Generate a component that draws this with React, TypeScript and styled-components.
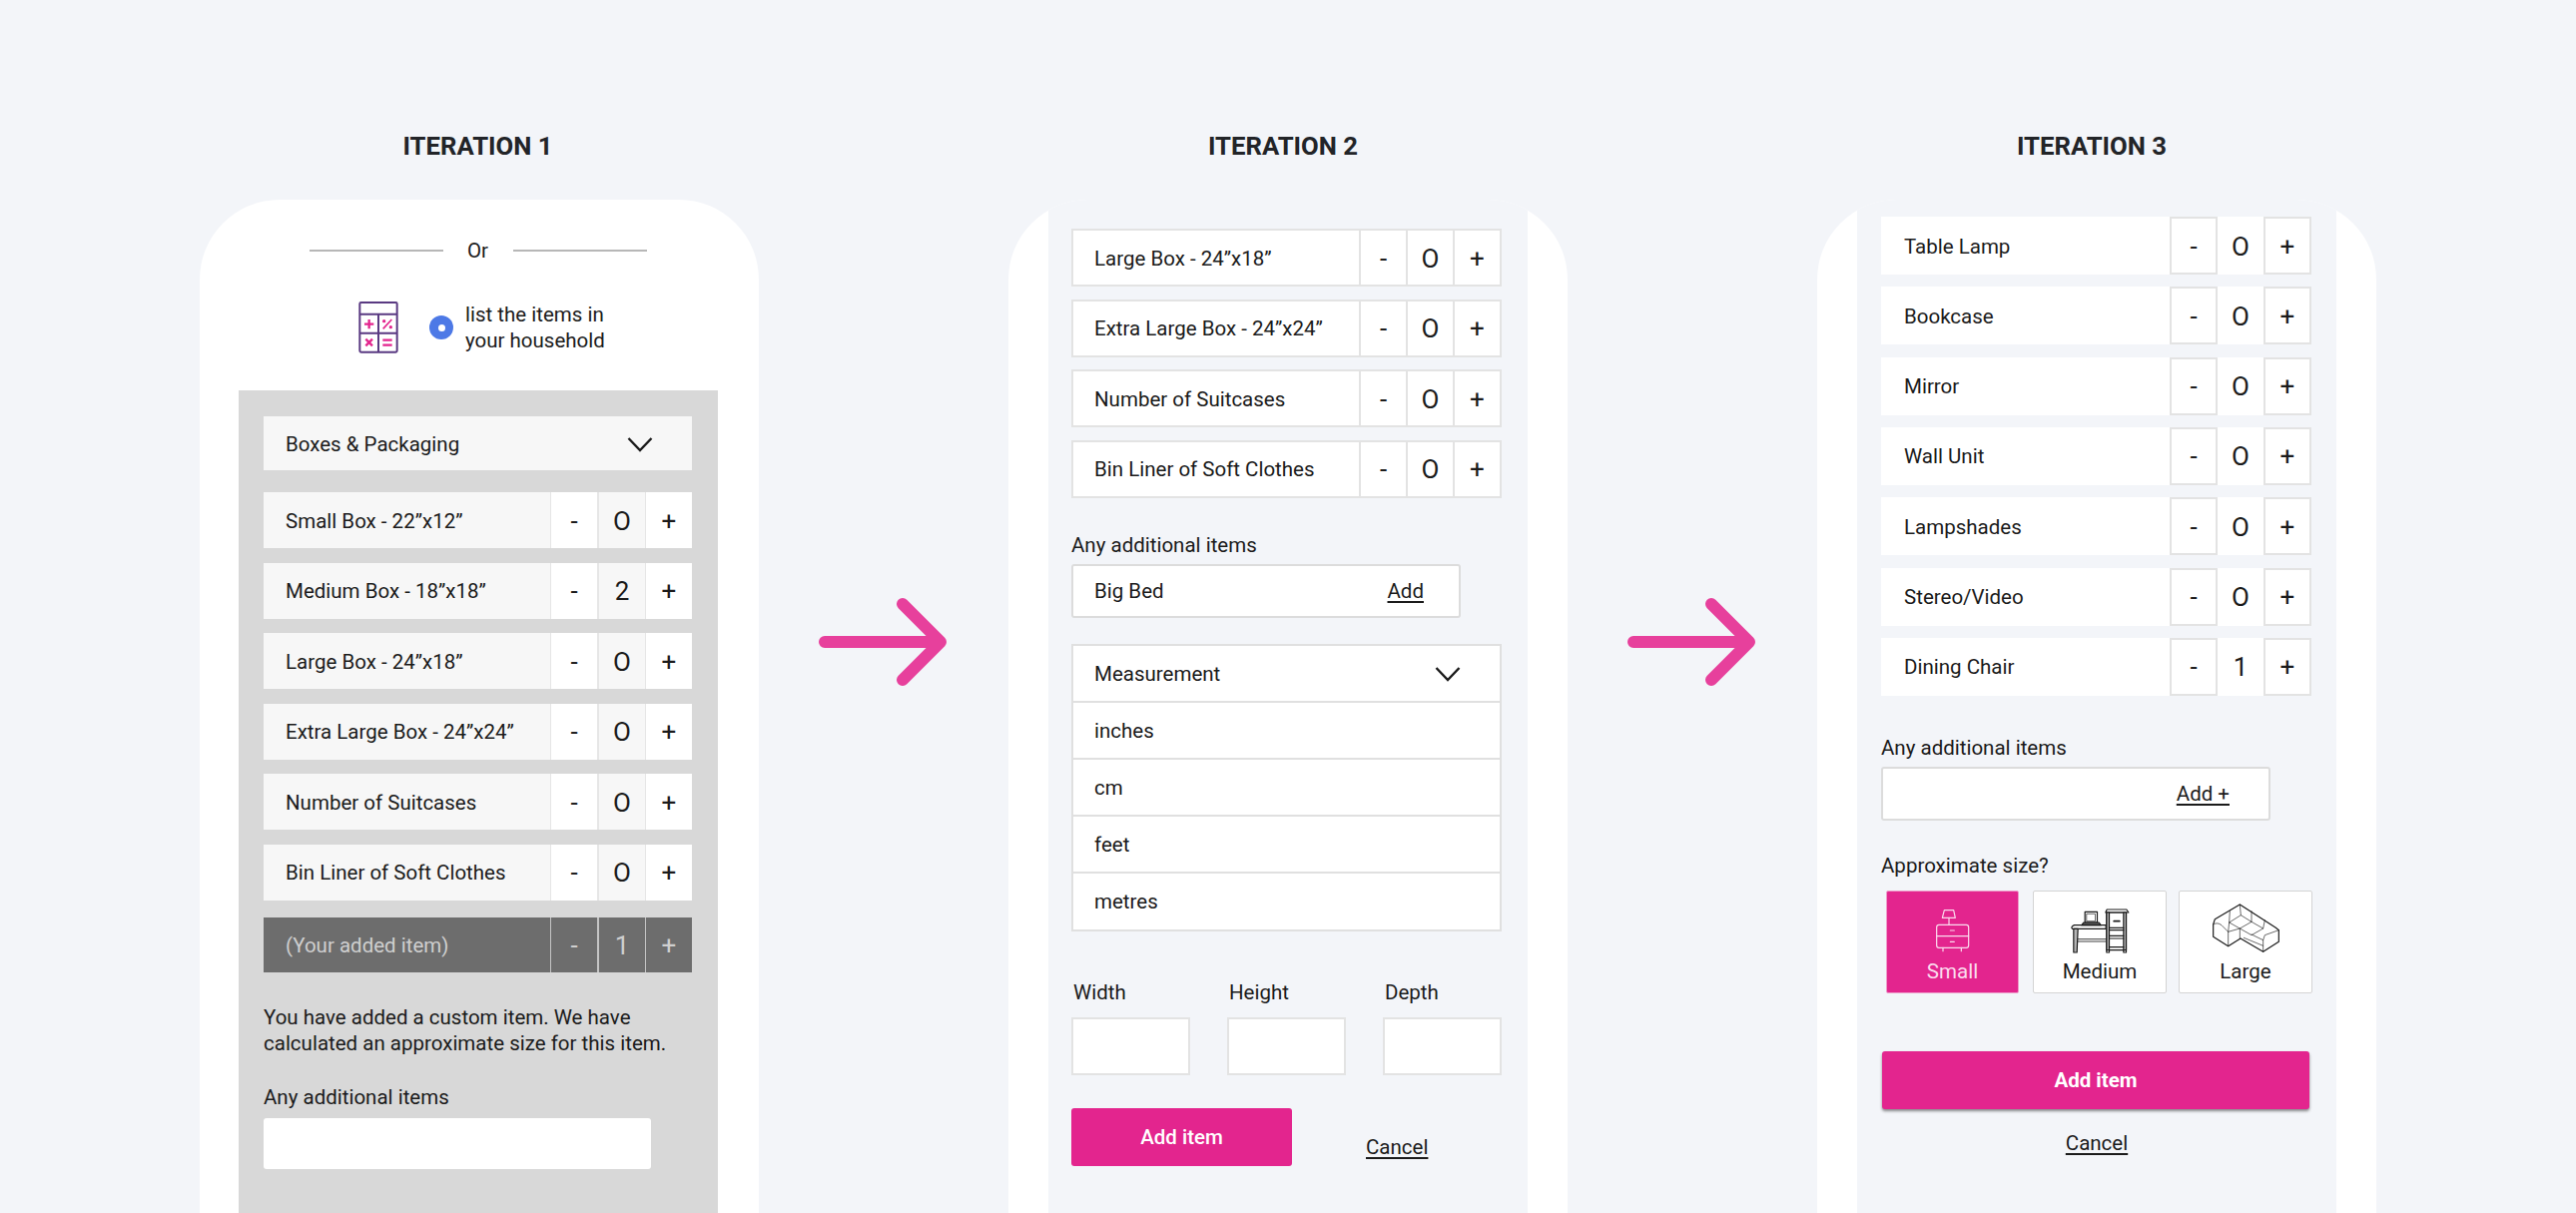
import React from "react";
import styled, { createGlobalStyle, css } from "styled-components";

const PINK = "#e3258e";
const BG = "#f3f5f9";
const LINE = "#e3e3e3";
const INK = "#1b1b1b";

const GlobalStyle = createGlobalStyle`
  html, body {
    margin: 0;
    padding: 0;
    background: ${BG};
  }
  * {
    box-sizing: border-box;
  }
  body {
    font-family: Roboto, "Liberation Sans", sans-serif;
    color: ${INK};
  }
`;

const PageEl = styled.div`
  display: flex;
  align-items: flex-start;
  width: 2580px;
  height: 1215px;
  padding: 131px 0 0 200px;
  overflow: hidden;
  background: ${BG};
`;
const ColumnEl = styled.section`
  width: 560px;
  flex-shrink: 0;
`;
const HeadingEl = styled.h2<{ $shift: number }>`
  margin: 0 0 39px;
  height: 30px;
  padding-right: ${(p) => p.$shift}px;
  font-size: 25.7px;
  line-height: 30px;
  font-weight: 700;
  text-align: center;
  color: #222428;
`;
const PhoneEl = styled.div`
  display: flex;
  flex-direction: column;
  height: 1040px;
  background: #fff;
  border-radius: 80px 80px 0 0;
  overflow: hidden;
`;
const TopMaskEl = styled.div`
  height: 10px;
  flex-shrink: 0;
  background: ${BG};
`;
const BandEl = styled.div<{ $top: number; $left: number }>`
  flex: 1;
  margin: 0 40px;
  padding: ${(p) => p.$top}px 0 0 ${(p) => p.$left}px;
  background: ${BG};
`;
const ArrowEl = styled.svg`
  width: 131px;
  height: 90px;
  flex-shrink: 0;
  margin: 467px 59px 0 60px;
  fill: none;
  stroke: #e7409c;
  stroke-width: 12;
  stroke-linecap: round;
  stroke-linejoin: round;
`;

const DividerEl = styled.div`
  display: flex;
  align-items: center;
  justify-content: center;
  margin-top: 38px;
  padding-right: 3px;
  font-size: 20.5px;
  line-height: 26px;
`;
const DividerLineEl = styled.span`
  width: 134px;
  height: 2px;
  background: #b7b7b7;
`;
const OrEl = styled.span`
  width: 70px;
  text-align: center;
`;
const ChoiceEl = styled.div`
  display: flex;
  align-items: center;
  margin-top: 37px;
  padding-left: 158px;
`;
const CalcIconEl = styled.svg`
  width: 42px;
  height: 54px;
  margin-right: 30px;
  fill: none;
`;
const RadioEl = styled.span`
  display: flex;
  align-items: center;
  justify-content: center;
  width: 24px;
  height: 24px;
  margin-right: 12px;
  border-radius: 50%;
  background: #4d79e6;
  &::after {
    content: "";
    width: 7px;
    height: 7px;
    border-radius: 50%;
    background: #fff;
  }
`;
const ChoiceTextEl = styled.span`
  font-size: 20.5px;
  line-height: 26px;
`;
const PanelEl = styled.div`
  flex: 1;
  margin: 36px 41px 0 39px;
  padding: 26px 26px 0 25px;
  background: #d8d8d8;
`;
const SelectEl = styled.div<{ $tone: "soft" | "line" }>`
  display: flex;
  align-items: center;
  justify-content: space-between;
  padding-top: 1px;
  font-size: 20.5px;
  ${(p) =>
    p.$tone === "soft"
      ? css`
          height: 54px;
          padding-right: 39px;
          padding-left: 22px;
          background: #f7f7f7;
        `
      : css`
          height: 100%;
          padding-right: 39px;
          padding-left: 21px;
          background: #fff;
        `}
`;
const ChevronEl = styled.svg`
  width: 26px;
  height: 16px;
  fill: none;
  stroke: #1b1b1b;
  stroke-width: 2.4;
`;
const RowListEl = styled.div<{ $gap: number; $top?: number }>`
  display: flex;
  flex-direction: column;
  gap: ${(p) => p.$gap}px;
  margin-top: ${(p) => p.$top ?? 0}px;
`;
type Tone = "panel" | "dark" | "lined" | "boxed";
const RowEl = styled.div<{ $tone: Tone }>`
  display: grid;
  font-size: 20.5px;
  ${(p) =>
    p.$tone === "panel" &&
    css`
      grid-template-columns: 287px 47px 48px 47px;
      height: 56px;
      background: #e6e6e6;
      color: ${INK};
    `}
  ${(p) =>
    p.$tone === "dark" &&
    css`
      grid-template-columns: 287px 47px 48px 47px;
      height: 55px;
      margin-top: 3px;
      background: #c4c4c4;
      color: #cfcfcf;
    `}
  ${(p) =>
    p.$tone === "lined" &&
    css`
      grid-template-columns: 1fr 45px 45px 45px;
      gap: 2px;
      width: 431px;
      height: 58px;
      padding: 2px;
      background: ${LINE};
    `}
  ${(p) =>
    p.$tone === "boxed" &&
    css`
      grid-template-columns: 289px 48px 46px 48px;
      width: 431px;
      height: 58px;
      background: #fff;
    `}
`;
const RowNameEl = styled.div<{ $tone: Tone }>`
  display: flex;
  align-items: center;
  padding-top: 1px;
  ${(p) => p.$tone === "panel" && "padding-left: 22px; background: #f7f7f7;"}
  ${(p) => p.$tone === "dark" && "padding-left: 22px; background: #6d6d6d;"}
  ${(p) => p.$tone === "lined" && "padding-left: 21px; background: #fff;"}
  ${(p) => p.$tone === "boxed" && "padding-left: 23px; background: #fff;"}
`;
const StepCellEl = styled.div<{ $tone: Tone; $value?: boolean }>`
  display: flex;
  align-items: center;
  justify-content: center;
  padding-top: 1px;
  font-size: 26px;
  ${(p) =>
    p.$tone === "panel" &&
    css`
      margin-left: ${p.$value ? 2 : 1}px;
      background: ${p.$value ? "#f7f7f7" : "#fff"};
    `}
  ${(p) =>
    p.$tone === "dark" &&
    css`
      margin-left: ${p.$value ? 2 : 1}px;
      background: #6d6d6d;
    `}
  ${(p) => p.$tone === "lined" && "background: #fff;"}
  ${(p) => p.$tone === "boxed" && !p.$value && `border: 2px solid ${LINE};`}
`;

const FieldLabelEl = styled.div<{ $top: number }>`
  margin-top: ${(p) => p.$top}px;
  font-size: 20.5px;
  line-height: 26px;
`;
const NoteEl = styled.p`
  margin: 33px 0 0;
  font-size: 20.5px;
  line-height: 25.5px;
`;
const PlainFieldEl = styled.div`
  width: 388px;
  height: 51px;
  margin-top: 8px;
  background: #fff;
  border-radius: 3px;
`;
const TextFieldEl = styled.div<{ $end: number }>`
  display: flex;
  align-items: center;
  justify-content: space-between;
  width: 390px;
  height: 54px;
  margin-top: 6px;
  padding: 1px ${(p) => p.$end}px 0 21px;
  font-size: 20.5px;
  background: #fff;
  border: 2px solid #dcdcdc;
  border-radius: 3px;
`;
const LinkEl = styled.a`
  font-size: 20.5px;
  line-height: 26px;
  color: ${INK};
  text-decoration: underline;
  text-underline-offset: 3px;
`;
const OptionListEl = styled.div`
  display: grid;
  grid-auto-rows: 1fr;
  gap: 2px;
  width: 431px;
  height: 288px;
  margin-top: 26px;
  padding: 2px;
  background: #e0e0e0;
`;
const OptionEl = styled.div`
  display: flex;
  align-items: center;
  padding: 1px 0 0 21px;
  font-size: 20.5px;
  background: #fff;
`;
const DimsEl = styled.div`
  display: flex;
  justify-content: space-between;
  width: 431px;
  margin-top: 48px;
`;
const DimEl = styled.div`
  width: 119px;
`;
const DimLabelEl = styled.div`
  padding-left: 2px;
  font-size: 20.5px;
  line-height: 26px;
`;
const DimBoxEl = styled.div`
  height: 58px;
  margin-top: 12px;
  background: #fff;
  border: 2px solid ${LINE};
`;
const PrimaryButtonEl = styled.button<{ $wide?: boolean }>`
  height: 58px;
  padding: 0;
  border: 0;
  border-radius: 3px;
  background: ${PINK};
  color: #fff;
  font-family: inherit;
  font-size: 20.5px;
  ${(p) =>
    p.$wide
      ? css`
          display: block;
          width: 428px;
          margin: 58px 0 0 1px;
          font-weight: 700;
          box-shadow: 0 2px 3px rgba(0, 0, 0, 0.45);
        `
      : css`
          width: 221px;
          font-weight: 500;
        `}
`;
const ActionsEl = styled.div`
  display: flex;
  align-items: flex-start;
  margin-top: 33px;
  ${LinkEl} {
    margin: 26px 0 0 74px;
  }
`;
const CenteredLinkEl = styled.div`
  width: 432px;
  margin-top: 21px;
  text-align: center;
`;
const SizesEl = styled.div`
  display: flex;
  margin: 12px 0 0 5px;
`;
const SizeCardEl = styled.div<{ $active?: boolean; $width: number; $gap: number }>`
  display: flex;
  flex-direction: column;
  align-items: center;
  width: ${(p) => p.$width}px;
  height: 103px;
  margin-right: ${(p) => p.$gap}px;
  padding-top: 12px;
  border-radius: 2px;
  font-size: 20.5px;
  background: ${(p) => (p.$active ? PINK : "#fff")};
  color: ${(p) => (p.$active ? "#fbdcee" : INK)};
  border: 1px solid ${(p) => (p.$active ? "#ee9ccb" : "#d4d4d4")};
`;
const SizeIconEl = styled.svg<{ $width: number }>`
  width: ${(p) => p.$width}px;
  height: 50px;
  fill: none;
  stroke: currentColor;
  stroke-width: 3.6;
  stroke-linejoin: round;
  stroke-linecap: round;
`;
const SizeLabelEl = styled.span`
  margin-top: 5px;
  line-height: 26px;
`;

function Chevron() {
  return (
    <ChevronEl viewBox="0 0 26 16">
      <path d="M1.5 2 L13 14 L24.5 2" />
    </ChevronEl>
  );
}

function Arrow() {
  return (
    <ArrowEl viewBox="0 0 131 90">
      <path d="M6 45 H122 M84 7 L122 45 L84 83" />
    </ArrowEl>
  );
}

function CalcIcon() {
  return (
    <CalcIconEl viewBox="85 62 126 162">
      <g stroke="#5a3a82" strokeWidth="6" strokeLinejoin="round">
        <rect x="92" y="68" width="112" height="149" rx="4" />
        <path d="M92 103 H204 M92 160 H204 M148 103 V217" />
      </g>
      <g stroke="#e3258e" strokeWidth="7">
        <path d="M106 133 H134 M120 119 V147" />
        <path d="M162 147 L188 119" strokeWidth="5" />
        <path d="M110 178 L130 198 M130 178 L110 198" />
        <path d="M161 181 H189 M161 196 H189" />
      </g>
      <circle cx="165" cy="124" r="5" fill="#e3258e" />
      <circle cx="185" cy="142" r="5" fill="#e3258e" />
    </CalcIconEl>
  );
}

function NightstandIcon() {
  return (
    <SizeIconEl $width={40} viewBox="170 60 120 150">
      <path d="M204 80 H232 L237 103 H198 Z" />
      <path d="M218 103 V124" />
      <rect x="181" y="124" width="96" height="69" rx="7" />
      <path d="M181 158 H277 M222 141 H234 M222 175 H234 M200 193 V203 M255 193 V203" />
    </SizeIconEl>
  );
}

function DeskIcon() {
  return (
    <SizeIconEl $width={63} viewBox="19.5 15 189 150">
      <path d="M68 40 H105 V72 H68 Z" />
      <path d="M74 46 H99 V68 H74 Z" strokeWidth="2" />
      <path d="M58 80 L64 72 H110 L116 80 Z" fill="#555" />
      <path d="M36 80 H131 V91 H30 Q24 85 36 80 Z" />
      <path d="M34 91 L34 162 H44 L47 91 Z" fill="#b5b5b5" />
      <path d="M47 122 H132 M47 129 H132" strokeWidth="2.5" />
      <path d="M130 42 L134 33 H193 L199 42 Z" fill="#fff" />
      <path d="M133 42 H192 V162 H184 V155 H141 V162 H133 Z" />
      <path d="M133 42 H141 V155 H133 Z M184 42 H192 V155 H184 Z" fill="#b5b5b5" />
      <path d="M141 88 H184 M141 95 H184 M141 112 H184 M141 120 H184 M141 146 H184" />
      <path d="M155 68 H172" strokeWidth="5" />
    </SizeIconEl>
  );
}

function SofaIcon() {
  return (
    <SizeIconEl $width={72} viewBox="39 15 216 150">
      <path d="M130 18 L55 62 L50 78 V115 L95 143 L132 120 L200 160 L247 130 V95 L238 88 Z" />
      <g strokeWidth="2.8" strokeOpacity="0.7">
        <path d="M50 78 Q62 70 75 80 L95 100 V143 M95 100 L98 72" />
        <path d="M130 18 L133 50 L98 72 L130 90 L165 70 L133 50 M165 70 L200 90 L165 110 L130 90 V120" />
        <path d="M100 38 L98 72 M165 38 L165 70 M205 65 L200 90" />
        <path d="M247 95 L205 110 L200 125 V160 M200 125 L165 108 M142 118 L200 142 M95 100 L130 90" />
      </g>
    </SizeIconEl>
  );
}

type StepItem = { name: string; count: string };

function StepRow({ tone, name, count }: StepItem & { tone: Tone }) {
  return (
    <RowEl $tone={tone}>
      <RowNameEl $tone={tone}>{name}</RowNameEl>
      <StepCellEl $tone={tone}>-</StepCellEl>
      <StepCellEl $tone={tone} $value>
        {count}
      </StepCellEl>
      <StepCellEl $tone={tone}>+</StepCellEl>
    </RowEl>
  );
}

const boxes: StepItem[] = [
  { name: "Small Box - 22”x12”", count: "O" },
  { name: "Medium Box - 18”x18”", count: "2" },
  { name: "Large Box - 24”x18”", count: "O" },
  { name: "Extra Large Box - 24”x24”", count: "O" },
  { name: "Number of Suitcases", count: "O" },
  { name: "Bin Liner of Soft Clothes", count: "O" },
];

const furniture: StepItem[] = [
  { name: "Table Lamp", count: "O" },
  { name: "Bookcase", count: "O" },
  { name: "Mirror", count: "O" },
  { name: "Wall Unit", count: "O" },
  { name: "Lampshades", count: "O" },
  { name: "Stereo/Video", count: "O" },
  { name: "Dining Chair", count: "1" },
];

function IterationOne() {
  return (
    <ColumnEl>
      <HeadingEl $shift={3}>ITERATION 1</HeadingEl>
      <PhoneEl>
        <DividerEl>
          <DividerLineEl />
          <OrEl>Or</OrEl>
          <DividerLineEl />
        </DividerEl>
        <ChoiceEl>
          <CalcIcon />
          <RadioEl />
          <ChoiceTextEl>
            list the items in
            <br />
            your household
          </ChoiceTextEl>
        </ChoiceEl>
        <PanelEl>
          <SelectEl $tone="soft">
            Boxes &amp; Packaging
            <Chevron />
          </SelectEl>
          <RowListEl $gap={14.5} $top={22}>
            {boxes.map((item) => (
              <StepRow key={item.name} tone="panel" {...item} />
            ))}
            <StepRow tone="dark" name="(Your added item)" count="1" />
          </RowListEl>
          <NoteEl>
            You have added a custom item. We have
            <br />
            calculated an approximate size for this item.
          </NoteEl>
          <FieldLabelEl $top={28}>Any additional items</FieldLabelEl>
          <PlainFieldEl />
        </PanelEl>
      </PhoneEl>
    </ColumnEl>
  );
}

function IterationTwo() {
  return (
    <ColumnEl>
      <HeadingEl $shift={10}>ITERATION 2</HeadingEl>
      <PhoneEl>
        <TopMaskEl />
        <BandEl $top={19} $left={23}>
          <RowListEl $gap={12.5}>
            {boxes.slice(2).map((item) => (
              <StepRow key={item.name} tone="lined" {...item} />
            ))}
          </RowListEl>
          <FieldLabelEl $top={34}>Any additional items</FieldLabelEl>
          <TextFieldEl $end={35}>
            Big Bed
            <LinkEl>Add</LinkEl>
          </TextFieldEl>
          <OptionListEl>
            <SelectEl $tone="line">
              Measurement
              <Chevron />
            </SelectEl>
            <OptionEl>inches</OptionEl>
            <OptionEl>cm</OptionEl>
            <OptionEl>feet</OptionEl>
            <OptionEl>metres</OptionEl>
          </OptionListEl>
          <DimsEl>
            {["Width", "Height", "Depth"].map((label) => (
              <DimEl key={label}>
                <DimLabelEl>{label}</DimLabelEl>
                <DimBoxEl />
              </DimEl>
            ))}
          </DimsEl>
          <ActionsEl>
            <PrimaryButtonEl>Add item</PrimaryButtonEl>
            <LinkEl>Cancel</LinkEl>
          </ActionsEl>
        </BandEl>
      </PhoneEl>
    </ColumnEl>
  );
}

function IterationThree() {
  return (
    <ColumnEl>
      <HeadingEl $shift={10}>ITERATION 3</HeadingEl>
      <PhoneEl>
        <TopMaskEl />
        <BandEl $top={7} $left={24}>
          <RowListEl $gap={12.33}>
            {furniture.map((item) => (
              <StepRow key={item.name} tone="boxed" {...item} />
            ))}
          </RowListEl>
          <FieldLabelEl $top={39}>Any additional items</FieldLabelEl>
          <TextFieldEl $end={39}>
            <span />
            <LinkEl>Add +</LinkEl>
          </TextFieldEl>
          <FieldLabelEl $top={32}>Approximate size?</FieldLabelEl>
          <SizesEl>
            <SizeCardEl $active $width={133} $gap={14}>
              <NightstandIcon />
              <SizeLabelEl>Small</SizeLabelEl>
            </SizeCardEl>
            <SizeCardEl $width={134} $gap={12}>
              <DeskIcon />
              <SizeLabelEl>Medium</SizeLabelEl>
            </SizeCardEl>
            <SizeCardEl $width={134} $gap={0}>
              <SofaIcon />
              <SizeLabelEl>Large</SizeLabelEl>
            </SizeCardEl>
          </SizesEl>
          <PrimaryButtonEl $wide>Add item</PrimaryButtonEl>
          <CenteredLinkEl>
            <LinkEl>Cancel</LinkEl>
          </CenteredLinkEl>
        </BandEl>
      </PhoneEl>
    </ColumnEl>
  );
}

function App() {
  return (
    <PageEl>
      <GlobalStyle />
      <IterationOne />
      <Arrow />
      <IterationTwo />
      <Arrow />
      <IterationThree />
    </PageEl>
  );
}

export default App;
